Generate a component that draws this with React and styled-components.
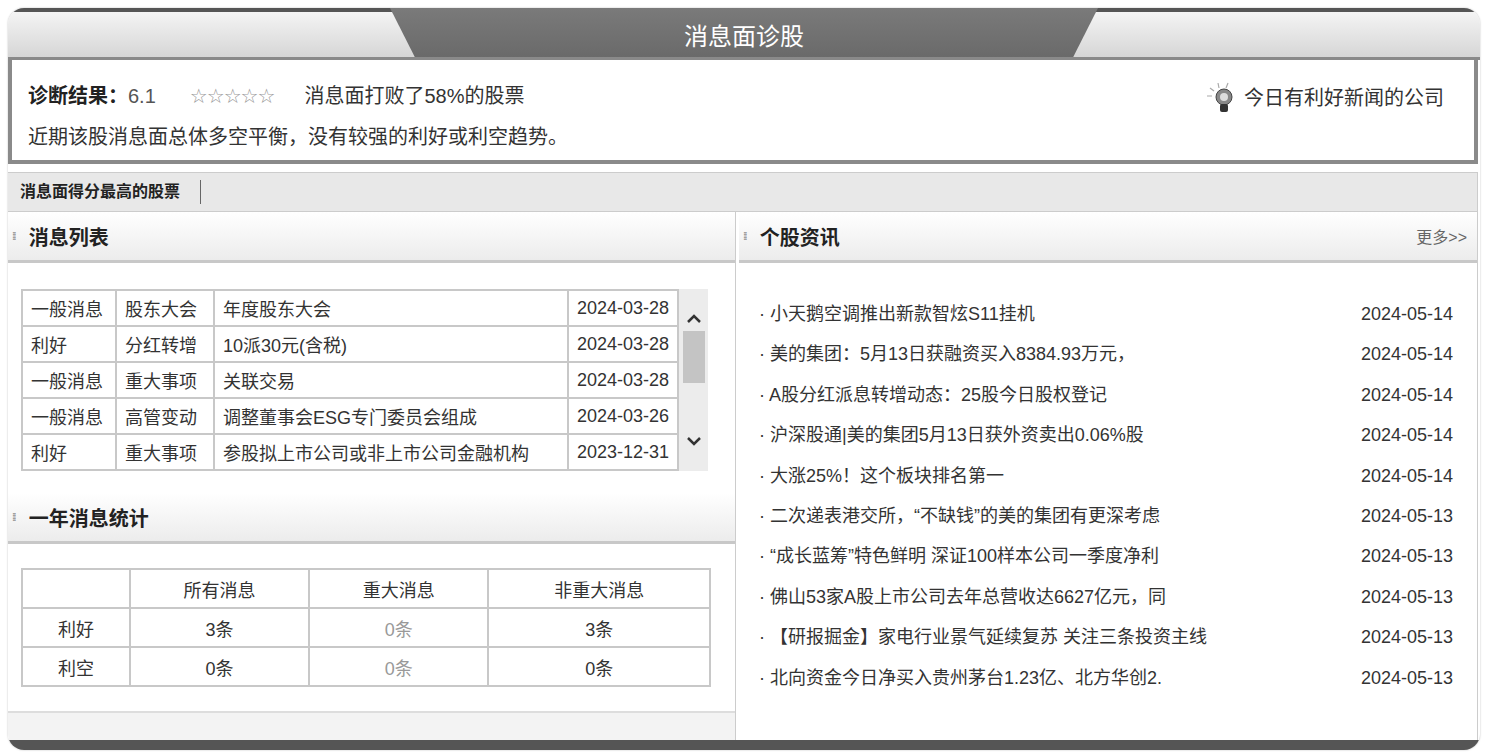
import React from "react";
import styled, { createGlobalStyle } from "styled-components";

const G = createGlobalStyle`
  html,body{margin:0;padding:0;background:#fff;}
  body{font-family:"Liberation Sans","Noto Sans CJK SC",sans-serif;color:#333;}
`;
const Frame = styled.div`
  margin:8px; width:1472px; height:742px; border-radius:16px; overflow:hidden;
  background:#fff; display:flex; flex-direction:column; box-shadow:0 0 2px #bbb;
`;
const Top = styled.div`
  height:45px; display:flex; border-top:4px solid #555;
  background:linear-gradient(#f4f4f4,#d6d6d6); border-bottom:3px solid #8a8a8a;
`;
const TitleTab = styled.div`
  margin-left:382px; width:708px; height:45px; background:linear-gradient(#7a7a7a,#6a6a6a);
  clip-path:polygon(0 0,100% 0,96.5% 100%,3.5% 100%);
  color:#fff; font-size:24px; display:flex; align-items:center; justify-content:center; margin-top:-4px; padding-top:4px;
`;
const Diag = styled.div`
  height:104px; border:4px solid #8a8a8a; border-top:0; margin-right:2px;
  display:flex; justify-content:space-between; padding:20px 30px 0 16px; box-sizing:border-box;
  font-size:20px; color:#333;
`;
const Line = styled.div`margin-bottom:12px; display:flex; align-items:baseline;`;
const B = styled.b`color:#222;`;
const Gray = styled.span`color:#555; margin-right:34px;`;
const Stars = styled.span`color:#999; letter-spacing:-1px; margin-right:30px; font-size:20px; font-family:"DejaVu Sans",sans-serif;`;
const Hint = styled.div`display:flex; align-items:flex-start; gap:8px; padding-top:2px;`;
const Tabs = styled.div`
  margin-top:8px; height:38px; background:#e8e8e8; border:1px solid #ccc; border-left:0;
  display:flex; align-items:center; margin-right:2px;
`;
const TabItem = styled.div`
  font-size:16px; font-weight:bold; padding:0 20px 0 12px; border-right:1px solid #666; line-height:24px; color:#222;
`;
const Cols = styled.div`display:flex; flex:1; gap:3px; margin-right:2px;`;
const Col = styled.div`
  width:${p=>p.w}px; display:flex; flex-direction:column; background:#fff;
  border-right:1px solid #ccc;
`;
const Head = styled.div`
  height:48px; background:linear-gradient(#fff,#ececec); border-bottom:3px solid #c8c8c8;
  display:flex; align-items:center; padding:0 10px 0 4px; font-size:20px; font-weight:bold; color:#222;
`;
const Dots = styled.span`font-size:10px; color:#999; margin-right:14px; letter-spacing:-2px;`;
const More = styled.span`margin-left:auto; font-size:16px; font-weight:normal; color:#666;`;
const TableWrap = styled.div`display:flex; margin:26px 0 22px 13px;`;
const T = styled.table`
  border-collapse:collapse; font-size:18px; color:#333;
  td{border:2px solid #c8c8c8; padding:0 8px; height:34px; white-space:nowrap;}
`;
const Scroll = styled.div`
  width:29px; background:#ececec; display:flex; flex-direction:column; align-items:center; padding:24px 0 24px;
`;
const Thumb = styled.div`width:22px; height:52px; background:#c4c4c4; margin-top:8px;`;
const Stat = styled.table`
  margin:24px 0 24px 13px; border-collapse:collapse; font-size:18px; color:#333; width:690px;
  td{border:2px solid #c8c8c8; height:35px; text-align:center;}
`;
const Muted = styled.td`color:#999;`;
const Foot = styled.div`flex:1; background:#f3f3f3; border-top:2px solid #ddd;`;
const News = styled.div`padding:36px 24px 0 20px; display:flex; flex-direction:column;`;
const NRow = styled.div`height:40.4px; display:flex; justify-content:space-between; align-items:baseline; font-size:18px; color:#333;`;
const Bottom = styled.div`height:10px; background:#555;`;

const rows=[["一般消息","股东大会","年度股东大会","2024-03-28"],["利好","分红转增","10派30元(含税)","2024-03-28"],["一般消息","重大事项","关联交易","2024-03-28"],["一般消息","高管变动","调整董事会ESG专门委员会组成","2024-03-26"],["利好","重大事项","参股拟上市公司或非上市公司金融机构","2023-12-31"]];
const news=[["小天鹅空调推出新款智炫S11挂机","2024-05-14"],["美的集团：5月13日获融资买入8384.93万元，","2024-05-14"],["A股分红派息转增动态：25股今日股权登记","2024-05-14"],["沪深股通|美的集团5月13日获外资卖出0.06%股","2024-05-14"],["大涨25%！这个板块排名第一","2024-05-14"],["二次递表港交所，“不缺钱”的美的集团有更深考虑","2024-05-13"],["“成长蓝筹”特色鲜明 深证100样本公司一季度净利","2024-05-13"],["佛山53家A股上市公司去年总营收达6627亿元，同","2024-05-13"],["【研报掘金】家电行业景气延续复苏 关注三条投资主线","2024-05-13"],["北向资金今日净买入贵州茅台1.23亿、北方华创2.","2024-05-13"]];

const Bulb=()=>(<svg width="30" height="34" viewBox="0 0 30 34"><g stroke="#aaa" strokeWidth="1.2"><line x1="4" y1="6" x2="8" y2="9"/><line x1="12" y1="1" x2="13" y2="6"/><line x1="22" y1="1" x2="20" y2="6"/><line x1="1" y1="14" x2="6" y2="14"/></g><circle cx="18" cy="15" r="8" fill="#888" stroke="#444"/><circle cx="18" cy="15" r="4" fill="#ddd"/><rect x="14" y="22" width="8" height="8" rx="2" fill="#333"/></svg>);

export default function App(){
  return (<><G/><Frame>
    <Top><TitleTab>消息面诊股</TitleTab></Top>
    <Diag>
      <div>
        <Line><B>诊断结果：</B><Gray>6.1</Gray><Stars>☆☆☆☆☆</Stars><span>消息面打败了58%的股票</span></Line>
        <Line>近期该股消息面总体多空平衡，没有较强的利好或利空趋势。</Line>
      </div>
      <Hint><Bulb/><span>今日有利好新闻的公司</span></Hint>
    </Diag>
    <Tabs><TabItem>消息面得分最高的股票</TabItem></Tabs>
    <Cols>
      <Col w={727}>
        <Head><Dots>⁞⁞</Dots>消息列表</Head>
        <TableWrap>
          <T><tbody>{rows.map((r,i)=>(<tr key={i}><td style={{width:76}}>{r[0]}</td><td style={{width:80}}>{r[1]}</td><td style={{width:336}}>{r[2]}</td><td>{r[3]}</td></tr>))}</tbody></T>
          <Scroll><svg width="16" height="10" viewBox="0 0 16 10"><path d="M2 9L8 3L14 9" stroke="#333" strokeWidth="2.5" fill="none"/></svg><Thumb/><span style={{flex:1}}/><svg width="16" height="10" viewBox="0 0 16 10"><path d="M2 1L8 7L14 1" stroke="#333" strokeWidth="2.5" fill="none"/></svg></Scroll>
        </TableWrap>
        <Head><Dots>⁞⁞</Dots>一年消息统计</Head>
        <Stat><tbody>
          <tr><td style={{width:104}}></td><td>所有消息</td><td>重大消息</td><td>非重大消息</td></tr>
          <tr><td>利好</td><td>3条</td><Muted>0条</Muted><td>3条</td></tr>
          <tr><td>利空</td><td>0条</td><Muted>0条</Muted><td>0条</td></tr>
        </tbody></Stat>
        <Foot/>
      </Col>
      <Col w={738}>
        <Head><Dots>⁞⁞</Dots>个股资讯<More>更多&gt;&gt;</More></Head>
        <News>{news.map((n,i)=>(<NRow key={i}><span>· {n[0]}</span><span>{n[1]}</span></NRow>))}</News>
      </Col>
    </Cols>
    <Bottom/>
  </Frame></>);
}
